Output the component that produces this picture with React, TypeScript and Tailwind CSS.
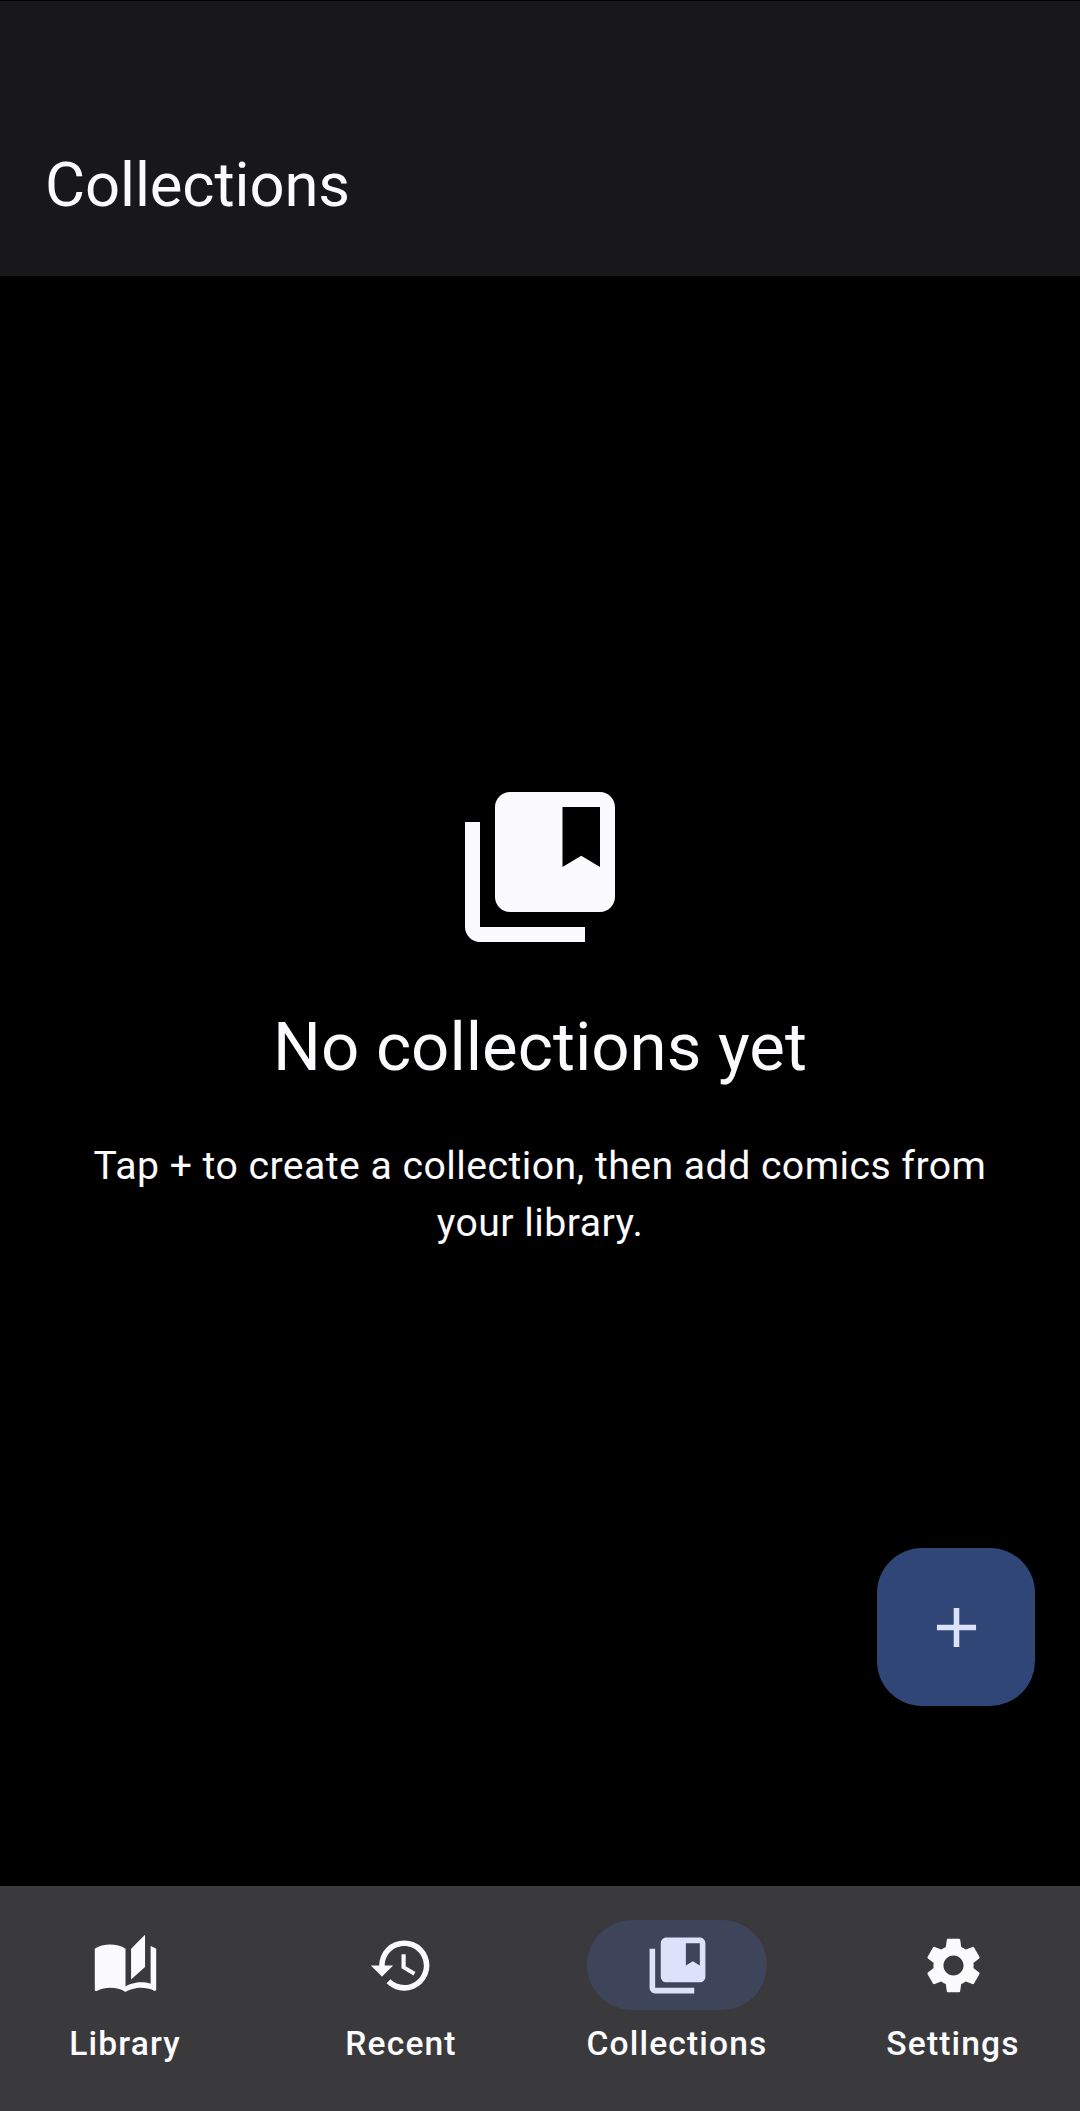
import { MdAdd, MdAutoStories, MdCollectionsBookmark, MdHistory, MdSettings } from "react-icons/md";

const items = [
  { label: "Library", Icon: MdAutoStories },
  { label: "Recent", Icon: MdHistory },
  { label: "Collections", Icon: MdCollectionsBookmark, active: true },
  { label: "Settings", Icon: MdSettings },
];

export default function App() {
  return (
    <div className="relative flex h-[2111px] w-[1080px] flex-col overflow-hidden bg-black font-['Roboto',sans-serif] text-[#fbfbfe]">
      <header className="mt-px flex h-[275px] items-end bg-[#18181a] px-[45px] pb-[52px]">
        <h1 className="text-[61.6px] leading-[78px] font-normal tracking-[-0.1px]">Collections</h1>
      </header>

      <main className="flex flex-1 flex-col items-center px-[67px] pt-[501px]">
        <MdCollectionsBookmark className="h-[180px] w-[180px]" />
        <h2 className="mt-[45px] text-[67.2px] leading-[90px] font-normal whitespace-nowrap">No collections yet</h2>
        <p className="mt-[46px] text-center text-[39.2px] leading-[57px] tracking-[0.46px]">
          Tap + to create a collection, then add comics from your library.
        </p>
      </main>

      <button className="absolute top-[1548px] left-[877px] flex h-[158px] w-[158px] items-center justify-center rounded-[45px] bg-[#2f4676] text-[#dce2f9]">
        <MdAdd className="h-[67px] w-[67px]" />
      </button>

      <nav className="flex h-[225px] gap-[96px] bg-[#3a3a3c] pt-[34px] pl-[35px]">
        {items.map(({ label, Icon, active }) => (
          <div key={label} className="flex w-[180px] flex-col items-center">
            <div className={`flex h-[90px] w-[180px] items-center justify-center rounded-full ${active ? "bg-[#3e4459] text-[#dce2f9]" : ""}`}>
              <Icon className="h-[67px] w-[67px]" />
            </div>
            <span className="mt-[11px] text-[33.6px] leading-[45px] font-medium tracking-[1.15px] whitespace-nowrap">{label}</span>
          </div>
        ))}
      </nav>
    </div>
  );
}
